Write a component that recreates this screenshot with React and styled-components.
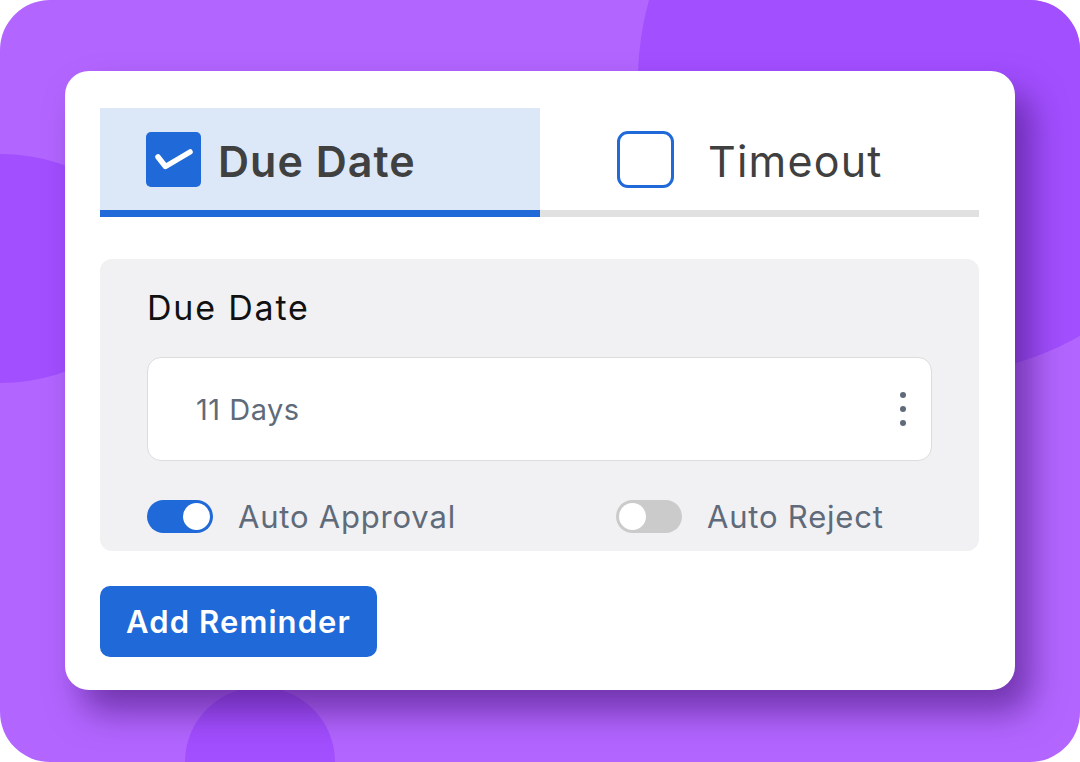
import React, { useState } from 'react'
import styled, { createGlobalStyle } from 'styled-components';

const GlobalStyle = createGlobalStyle`
    body{
        margin: 0;
        background: #ffffff;
        font-family: Inter, "Noto Sans", sans-serif;
    }
`

const CheckIcon = () => (
    <svg width="55" height="55" viewBox="0 0 55 55">
        <path d="M12 25 L19.5 34.5 L44 20" fill="none" stroke="#fff" strokeWidth="5.5" strokeLinecap="round" strokeLinejoin="round"/>
    </svg>
)

const App = () => {

    const [tab, setTab] = useState('due');
    const [approval, setApproval] = useState(true);
    const [reject, setReject] = useState(false);

    return (
        <>
            <GlobalStyle/>
            <Stage>
                <BlobTop/>
                <BlobLeft/>
                <BlobBottom/>
                <Card>
                    <Tabs>
                        <Tab active={tab === 'due'} pad="46px" gap="17px" onClick={() => setTab('due')}>
                            {tab === 'due' ? <CheckedBox><CheckIcon/></CheckedBox> : <EmptyBox/>}
                            <TabLabel bold>Due Date</TabLabel>
                        </Tab>
                        <Tab active={tab === 'timeout'} pad="77px" gap="34px" onClick={() => setTab('timeout')}>
                            {tab === 'timeout' ? <CheckedBox><CheckIcon/></CheckedBox> : <EmptyBox/>}
                            <TabLabel>Timeout</TabLabel>
                        </Tab>
                    </Tabs>

                    <Panel>
                        <FieldLabel>Due Date</FieldLabel>
                        <Field>
                            <FieldValue>11 Days</FieldValue>
                            <Dots>
                                <span/><span/><span/>
                            </Dots>
                        </Field>
                        <ToggleRow>
                            <ToggleItem>
                                <Switch on={approval} onClick={() => setApproval(!approval)}/>
                                <ToggleText>Auto Approval</ToggleText>
                            </ToggleItem>
                            <ToggleItem>
                                <Switch on={reject} onClick={() => setReject(!reject)}/>
                                <ToggleText>Auto Reject</ToggleText>
                            </ToggleItem>
                        </ToggleRow>
                    </Panel>

                    <Button>Add Reminder</Button>
                </Card>
            </Stage>
        </>
    )
}

export default App;


const Stage = styled.div`
    width: 1080px;
    height: 762px;
    box-sizing: border-box;
    border-radius: 50px;
    background: #b366ff;
    position: relative;
    overflow: hidden;
    display: flex;
    padding: 71px 65px 72px 65px;
`

const Blob = styled.div`
    position: absolute;
    border-radius: 50%;
    background: #a24fff;
    z-index: 0;
`

const BlobTop = styled(Blob)`
    width: 590px;
    height: 590px;
    left: 638px;
    top: -215px;
`

const BlobLeft = styled(Blob)`
    width: 300px;
    height: 229px;
    left: -150px;
    top: 154px;
`

const BlobBottom = styled(Blob)`
    width: 150px;
    height: 150px;
    left: 185px;
    top: 687px;
`

const Card = styled.div`
    position: relative;
    z-index: 1;
    flex: 1;
    background: #fff;
    border-radius: 24px;
    box-shadow: 16px 22px 34px rgba(70, 20, 120, 0.6);
    padding: 37px 36px 33px 35px;
    display: flex;
    flex-direction: column;

    > *{
        flex-shrink: 0;
    }
`

const Tabs = styled.div`
    display: grid;
    grid-template-columns: 440px 1fr;
`

const Tab = styled.div`
    height: 102px;
    display: flex;
    align-items: center;
    padding-left: ${({pad}) => pad};
    gap: ${({gap}) => gap};
    background: ${({active}) => (active ? '#dce8f8' : 'transparent')};
    border-bottom: 7px solid ${({active}) => (active ? '#1f69d8' : '#e1e1e1')};
    cursor: pointer;
`

const CheckedBox = styled.div`
    width: 55px;
    height: 55px;
    border-radius: 5px;
    background: #1f69d8;
    display: flex;
`

const EmptyBox = styled.div`
    width: 57px;
    height: 57px;
    box-sizing: border-box;
    border: 3px solid #1f69d8;
    border-radius: 11px;
`

const TabLabel = styled.span`
    font-size: 43px;
    padding-top: 4px;
    font-weight: ${({bold}) => (bold ? 600 : 400)};
    color: #404040;
    letter-spacing: ${({bold}) => (bold ? '1px' : '1.2px')};
`

const Panel = styled.div`
    margin-top: 42px;
    background: #f1f1f3;
    border-radius: 12px;
    padding: 30px 47px 18px 47px;
    display: flex;
    flex-direction: column;
`

const FieldLabel = styled.div`
    font-size: 34px;
    line-height: 38px;
    letter-spacing: 1.8px;
    color: #111;
`

const Field = styled.div`
    margin-top: 30px;
    height: 104px;
    box-sizing: border-box;
    background: #fff;
    border: 1px solid #dcdcdc;
    border-radius: 14px;
    display: flex;
    align-items: center;
    justify-content: space-between;
    padding: 0 25px 0 48px;
`

const FieldValue = styled.span`
    font-size: 29px;
    letter-spacing: 0.5px;
    color: #5f6b7a;
`

const Dots = styled.div`
    display: flex;
    flex-direction: column;
    gap: 8px;

    span{
        width: 6px;
        height: 6px;
        border-radius: 50%;
        background: #5f6b7a;
    }
`

const ToggleRow = styled.div`
    margin-top: 39px;
    display: grid;
    grid-template-columns: 469px 1fr;
`

const ToggleItem = styled.div`
    display: flex;
    align-items: center;
    gap: 25px;
    height: 33px;
`

const Switch = styled.div`
    width: 66px;
    height: 33px;
    border-radius: 17px;
    background: ${({on}) => (on ? '#1f69d8' : '#cbcbcb')};
    position: relative;
    cursor: pointer;

    &::after{
        content: '';
        position: absolute;
        top: 3px;
        left: ${({on}) => (on ? '36px' : '3px')};
        width: 27px;
        height: 27px;
        border-radius: 50%;
        background: #fff;
    }
`

const ToggleText = styled.span`
    font-size: 31px;
    line-height: 33px;
    letter-spacing: 0.8px;
    color: #5f6b7a;
`

const Button = styled.button`
    margin-top: 35px;
    align-self: flex-start;
    width: 277px;
    height: 71px;
    border: none;
    border-radius: 10px;
    background: #1f69d8;
    color: #fff;
    font-family: Inter, "Noto Sans", sans-serif;
    font-size: 31px;
    font-weight: 600;
    letter-spacing: 1.1px;
    cursor: pointer;
`
